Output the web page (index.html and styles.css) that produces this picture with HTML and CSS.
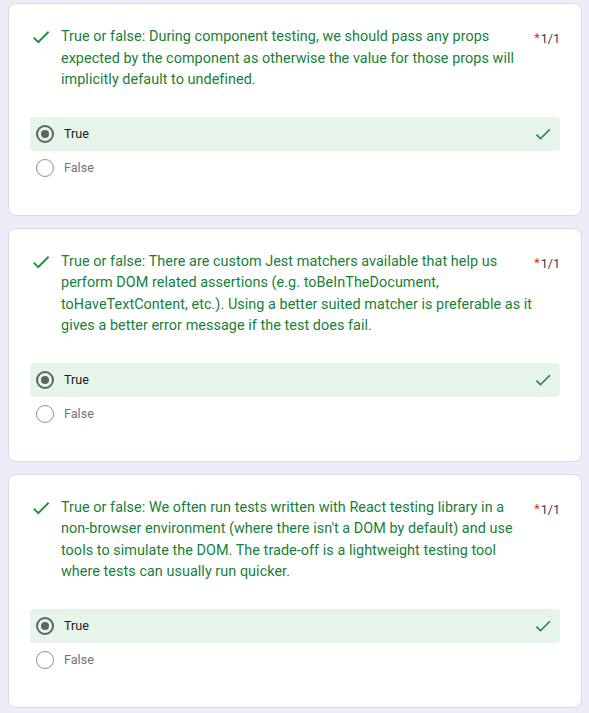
FILE: index.html
```html
<!DOCTYPE html>
<html lang="en">
<head>
<meta charset="utf-8">
<title>Quiz results</title>
<link rel="stylesheet" href="styles.css">
</head>
<body>
<main class="list">
  <section class="card">
    <div class="q-head">
      <svg class="q-check" viewBox="0 0 24 24" aria-hidden="true"><path d="M9 16.17L4.83 12l-1.42 1.41L9 19 21 7l-1.41-1.41z"/></svg>
      <div class="q-text">True or false: During component testing, we should pass any props expected by the component as otherwise the value for those props will implicitly default to undefined.</div>
      <div class="q-score"><span class="req">*</span>1/1</div>
    </div>
    <div class="options">
      <div class="opt opt-correct">
        <span class="radio radio-on"></span><span class="opt-label">True</span>
        <svg class="opt-check" viewBox="0 0 24 24" aria-hidden="true"><path d="M9 16.17L4.83 12l-1.42 1.41L9 19 21 7l-1.41-1.41z"/></svg>
      </div>
      <div class="opt">
        <span class="radio"></span><span class="opt-label opt-muted">False</span>
      </div>
    </div>
  </section>

  <section class="card">
    <div class="q-head">
      <svg class="q-check" viewBox="0 0 24 24" aria-hidden="true"><path d="M9 16.17L4.83 12l-1.42 1.41L9 19 21 7l-1.41-1.41z"/></svg>
      <div class="q-text">True or false: There are custom Jest matchers available that help us perform DOM related assertions (e.g. toBeInTheDocument, toHaveTextContent, etc.). Using a better suited matcher is preferable as it gives a better error message if the test does fail.</div>
      <div class="q-score"><span class="req">*</span>1/1</div>
    </div>
    <div class="options">
      <div class="opt opt-correct">
        <span class="radio radio-on"></span><span class="opt-label">True</span>
        <svg class="opt-check" viewBox="0 0 24 24" aria-hidden="true"><path d="M9 16.17L4.83 12l-1.42 1.41L9 19 21 7l-1.41-1.41z"/></svg>
      </div>
      <div class="opt">
        <span class="radio"></span><span class="opt-label opt-muted">False</span>
      </div>
    </div>
  </section>

  <section class="card">
    <div class="q-head">
      <svg class="q-check" viewBox="0 0 24 24" aria-hidden="true"><path d="M9 16.17L4.83 12l-1.42 1.41L9 19 21 7l-1.41-1.41z"/></svg>
      <div class="q-text">True or false: We often run tests written with React testing library in a non-browser environment (where there isn't a DOM by default) and use tools to simulate the DOM. The trade-off is a lightweight testing tool where tests can usually run quicker.</div>
      <div class="q-score"><span class="req">*</span>1/1</div>
    </div>
    <div class="options">
      <div class="opt opt-correct">
        <span class="radio radio-on"></span><span class="opt-label">True</span>
        <svg class="opt-check" viewBox="0 0 24 24" aria-hidden="true"><path d="M9 16.17L4.83 12l-1.42 1.41L9 19 21 7l-1.41-1.41z"/></svg>
      </div>
      <div class="opt">
        <span class="radio"></span><span class="opt-label opt-muted">False</span>
      </div>
    </div>
  </section>
</main>
</body>
</html>
```

FILE: styles.css
```css
* { box-sizing: border-box; }

html, body {
  margin: 0;
  background: #f0ebf8;
}

body {
  padding: 3px 7px 0 8px;
  font-family: Roboto, "Noto Sans", Arial, sans-serif;
  color: #202124;
}

.list {
  display: flex;
  flex-direction: column;
  gap: 12px;
}

.card {
  background: #fff;
  border: 1px solid #dadce0;
  border-radius: 8px;
  padding: 22px 21px 30px 21px;
}

.q-head {
  display: flex;
  align-items: flex-start;
}

.q-check {
  flex: none;
  width: 22px;
  height: 22px;
  margin: 0 9px 0 0;
  fill: #1e8e3e;
}

.q-text {
  flex: 1;
  font-size: 14.4px;
  line-height: 21.5px;
  color: #188038;
  letter-spacing: 0.05px;
  padding-right: 1px;
}

.q-score {
  flex: none;
  font-size: 12.6px;
  line-height: 21.5px;
  padding-top: 2px;
  color: #3c4043;
}

.req {
  color: #d93025;
  position: relative;
  top: -1px;
  margin-right: 1px;
}

.options {
  margin-top: 26px;
  display: flex;
  flex-direction: column;
}

.opt {
  display: flex;
  align-items: center;
  height: 34px;
  padding: 0 7px 0 6px;
  border-radius: 4px;
}

.opt-correct {
  background: #e6f4ea;
}

.radio {
  flex: none;
  width: 18px;
  height: 18px;
  border-radius: 50%;
  border: 1.3px solid #8d9296;
  display: flex;
  align-items: center;
  justify-content: center;
}

.radio-on {
  border: 2px solid #5f6368;
}

.radio-on::after {
  content: "";
  width: 8px;
  height: 8px;
  border-radius: 50%;
  background: #5f6368;
}

.opt-label {
  margin-left: 10px;
  font-size: 12.6px;
  flex: 1;
  color: #202124;
}

.opt-muted {
  color: #70757a;
}

.opt-check {
  flex: none;
  width: 20px;
  height: 20px;
  fill: #1e8e3e;
}
```
